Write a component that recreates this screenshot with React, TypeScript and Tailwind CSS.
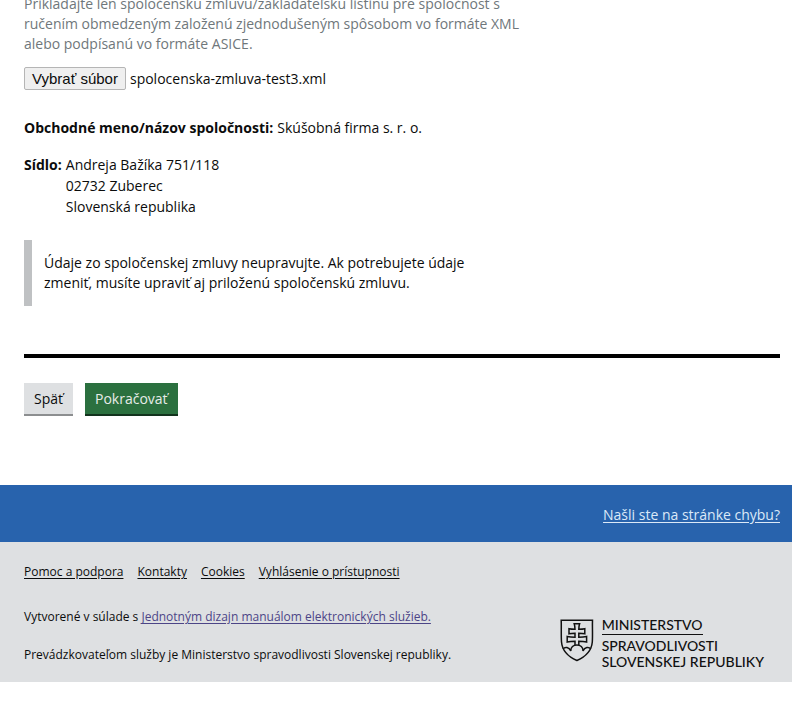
import { useRef } from 'react';

const footerLinks = [
  { label: 'Pomoc a podpora', href: '#pomoc' },
  { label: 'Kontakty', href: '#kontakty' },
  { label: 'Cookies', href: '#cookies' },
  { label: 'Vyhlásenie o prístupnosti', href: '#pristupnost' },
];

const Crest = () => (
  <svg viewBox="0 0 34 43" className="mt-[2px] h-[43px] w-[34px] shrink-0" fill="none" stroke="#111" strokeWidth="1.5" aria-hidden="true">
    <path d="M1.200 1.200H32.500C32.200 8 32.800 15 32.300 23C31.500 32 25 38 16.900 41.500C8.800 38 2.300 32 1.500 23C1 15 1.500 8 1.200 1.200Z" />
    <path d="M15 26V22.300C12 22.300 9.500 22.500 7.200 23V17.500C9.500 18 12 18.200 15 18.200V14.200C12.500 14.200 10.800 14.300 9 14.700V9.700C10.800 10.100 12.500 10.200 15 10.200C15 8 14.800 6.500 14.200 4.700H19.600C19 6.500 18.800 8 18.800 10.200C21.300 10.200 23 10.100 24.800 9.700V14.700C23 14.300 21.300 14.200 18.800 14.200V18.200C21.800 18.200 24.300 18 26.600 17.500V23C24.300 22.500 21.800 22.300 18.800 22.300V26" />
    <path d="M3 30C5 27.500 9 28 10.800 32C10.500 28 13.500 26 16.900 26C20.300 26 23.300 28 23 32C24.800 28 28.800 27.500 30.800 30" />
  </svg>
);

const MinistryLogo = () => (
  <div className="flex items-start gap-2 text-[#111]">
    <Crest />
    <div className="font-['Lato',sans-serif] text-[14px] font-medium leading-[16px]">
      <p className="w-fit border-b border-[#111] pb-px">MINISTERSTVO</p>
      <p className="pt-[3px]">SPRAVODLIVOSTI</p>
      <p>SLOVENSKEJ REPUBLIKY</p>
    </div>
  </div>
);

const FilePicker = () => {
  const fileRef = useRef<HTMLInputElement>(null);

  return (
    <div className="mt-[13px] flex items-center gap-1">
      <input ref={fileRef} type="file" accept=".xml,.asice" aria-label="Vybrať súbor" className="hidden" />
      <button
        type="button"
        onClick={() => fileRef.current?.click()}
        className="h-[23px] rounded-[2px] border border-[#b5b5b5] bg-[#efefef] px-[7px] font-['Liberation_Sans',sans-serif] text-[15px] leading-[20px]"
      >
        Vybrať súbor
      </button>
      <span>spolocenska-zmluva-test3.xml</span>
    </div>
  );
};

const App = () => {
  return (
    <div className="overflow-hidden bg-white font-['Open_Sans',sans-serif] text-[14px] leading-[20px] text-[#0b0c0c]">
      <main className="-mt-[6px] px-3 pl-6">
        <p className="max-w-[500px] text-[#6f777b]">
          Prikladajte len spoločenskú zmluvu/zakladateľskú listinu pre spoločnosť s ručením obmedzeným
          založenú zjednodušeným spôsobom vo formáte XML alebo podpísanú vo formáte ASICE.
        </p>
        <FilePicker />

        <dl className="mt-7">
          <div className="flex gap-1">
            <dt className="font-bold">Obchodné meno/názov spoločnosti:</dt>
            <dd>Skúšobná firma s. r. o.</dd>
          </div>
          <div className="mt-4 flex gap-1 leading-[21px]">
            <dt className="font-bold">Sídlo:</dt>
            <dd>
              Andreja Bažíka 751/118
              <br />
              02732 Zuberec
              <br />
              Slovenská republika
            </dd>
          </div>
        </dl>

        <div className="mt-[23px] w-fit border-l-8 border-[#bfc1c3] py-[13px] pl-3">
          <p className="max-w-[430px]">
            Údaje zo spoločenskej zmluvy neupravujte. Ak potrebujete údaje zmeniť, musíte upraviť aj
            priloženú spoločenskú zmluvu.
          </p>
        </div>

        <hr className="mt-12 border-t-4 border-black" />

        <div className="mt-[25px] flex gap-3">
          <button type="button" className="h-[33px] border-b-2 border-[#8c8e90] bg-[#dee0e2] px-[10px]">
            Späť
          </button>
          <button type="submit" className="h-[33px] border-b-2 border-[#12331d] bg-[#2b703f] px-[10px] text-[#e8ece9]">
            Pokračovať
          </button>
        </div>
      </main>

      <div className="mt-[69px] flex h-[57px] items-center justify-end bg-[#2863ad] px-3 pt-[2px]">
        <a href="#chyba" className="text-[#dce9f8] underline underline-offset-2">
          Našli ste na stránke chybu?
        </a>
      </div>

      <footer className="flex justify-between bg-[#dee0e2] pt-5 pr-7 pb-3 pl-6 text-[12px]">
        <div className="pb-[5px]">
          <nav className="flex gap-[14px]">
            {footerLinks.map((link) => (
              <a key={link.label} href={link.href} className="underline underline-offset-2">
                {link.label}
              </a>
            ))}
          </nav>
          <p className="mt-[25px]">
            Vytvorené v súlade s{' '}
            <a href="#manual" className="text-[#4c4587] underline underline-offset-2">
              Jednotným dizajn manuálom elektronických služieb.
            </a>
          </p>
          <p className="mt-[18px]">Prevádzkovateľom služby je Ministerstvo spravodlivosti Slovenskej republiky.</p>
        </div>
        <div className="self-end">
          <MinistryLogo />
        </div>
      </footer>
    </div>
  );
};

export default App;
